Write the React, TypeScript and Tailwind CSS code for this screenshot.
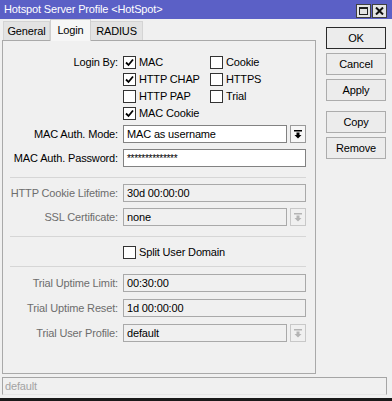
import React from 'react';

const font = { fontFamily: '"Liberation Sans", Arial, sans-serif' };

const Check: React.FC<{ checked?: boolean }> = ({ checked }) => (
  <span className="w-[13px] h-[13px] border border-[#333333] bg-white flex items-center justify-center shrink-0">
    {checked && (
      <svg width="11" height="11" viewBox="0 0 11 11">
        <path d="M2 5.5 L4.5 8 L9 2.5" fill="none" stroke="#000" strokeWidth="1.8" />
      </svg>
    )}
  </span>
);

const CheckItem: React.FC<{ label: string; checked?: boolean }> = ({ label, checked }) => (
  <div className="flex items-center h-[17px]">
    <Check checked={checked} />
    <span className="ml-[3px] text-black">{label}</span>
  </div>
);

const DropArrow: React.FC<{ disabled?: boolean }> = ({ disabled }) => (
  <svg width="8" height="9" viewBox="0 0 8 9">
    <rect x="0" y="0" width="8" height="1.5" fill={disabled ? '#b4b4b4' : '#000'} />
    <path d="M2.5 2.5 H5.5 V5 H7.5 L4 8.5 L0.5 5 H2.5 Z" fill={disabled ? '#b4b4b4' : '#000'} />
  </svg>
);

const Label: React.FC<{ text: string; disabled?: boolean }> = ({ text, disabled }) => (
  <div className={`w-[115px] text-right whitespace-nowrap ${disabled ? 'text-[#6d6d6d]' : 'text-black'}`}>{text}</div>
);

const Field: React.FC<{
  label: string;
  value: string;
  disabled?: boolean;
  select?: boolean;
  className?: string;
  password?: boolean;
}> = ({ label, value, disabled, select, className, password }) => (
  <div className={`flex items-center h-[18px] ${className ?? ''}`}>
    <Label text={label} disabled={disabled} />
    <div
      className={`ml-[5px] h-[18px] flex items-center pl-[3px] border ${
        disabled ? 'border-[#a9a9a9] bg-[#f0f0f0]' : 'border-[#828282] bg-white'
      } ${select ? 'w-[164px]' : 'w-[183px]'}`}
    >
      {password ? (
        <span className="text-[10px] tracking-[-0.3px] leading-none mt-[2px]">{value}</span>
      ) : (
        <span className="text-black">{value}</span>
      )}
    </div>
    {select && (
      <div
        className={`ml-[3px] w-[16px] h-[18px] border flex items-center justify-center ${
          disabled ? 'border-[#c8c8c8] bg-[#f0f0f0]' : 'border-[#9a9a9a] bg-[#f7f7f7]'
        }`}
      >
        <DropArrow disabled={disabled} />
      </div>
    )}
  </div>
);

const Sep: React.FC<{ className?: string }> = ({ className }) => (
  <div className={`ml-[7px] w-[296px] h-px bg-[#d6d6d6] ${className ?? ''}`} />
);

const Btn: React.FC<{ label: string; primary?: boolean; className?: string }> = ({ label, primary, className }) => (
  <div
    className={`w-[60px] h-[22px] flex items-center justify-center border bg-[#ececec] text-black ${
      primary ? 'border-[#2a2a2a]' : 'border-[#acacac]'
    } ${className ?? ''}`}
  >
    {label}
  </div>
);

export default function App() {
  return (
    <div
      className="w-[392px] h-[401px] bg-[#f0f0f0] text-[11px] tracking-[-0.15px] flex flex-col overflow-hidden"
      style={font}
    >
      {/* title bar */}
      <div className="h-[19px] bg-[#5b60c6] flex items-center shrink-0">
        <span className="ml-[4px] text-white text-[11px]">Hotspot Server Profile &lt;HotSpot&gt;</span>
        <div className="ml-auto mr-[5px] flex gap-[1px] mt-[2px]">
          <div className="w-[15px] h-[14px] bg-[#e4e4e4] border border-[#404040] flex items-center justify-center">
            <div className="w-[9px] h-[8px] border border-[#202020] border-t-2" />
          </div>
          <div className="w-[15px] h-[14px] bg-[#e4e4e4] border border-[#404040] flex items-center justify-center">
            <svg width="9" height="8" viewBox="0 0 9 8">
              <path d="M1 0.5 L8 7.5 M8 0.5 L1 7.5" stroke="#111" strokeWidth="2" />
            </svg>
          </div>
        </div>
      </div>

      <div className="flex shrink-0">
        {/* left: tabs + panel */}
        <div className="ml-[2px] w-[314px] flex flex-col">
          <div className="h-[21px] flex items-end relative z-10">
            <div className="ml-[1px] w-[47px] h-[19px] bg-[#e3e3e3] border border-b-0 border-[#d4d4d4] flex items-center justify-center text-black">
              General
            </div>
            <div className="w-[41px] h-[22px] -mb-px bg-[#f6f6f6] border border-b-0 border-[#cfcfcf] flex items-center justify-center text-black">
              Login
            </div>
            <div className="w-[52px] h-[19px] bg-[#e3e3e3] border border-b-0 border-l-0 border-[#d4d4d4] flex items-center justify-center text-black">
              RADIUS
            </div>
          </div>
          <div className="h-[334px] border border-[#a9a9a9] flex flex-col">
            <div className="flex mt-[13px]">
              <div className="h-[17px] flex items-center">
                <Label text="Login By:" />
              </div>
              <div className="ml-[5px] grid grid-cols-[87px_auto]">
                <CheckItem label="MAC" checked />
                <CheckItem label="Cookie" />
                <CheckItem label="HTTP CHAP" checked />
                <CheckItem label="HTTPS" />
                <CheckItem label="HTTP PAP" />
                <CheckItem label="Trial" />
                <CheckItem label="MAC Cookie" checked />
              </div>
            </div>
            <Field className="mt-[3px]" label="MAC Auth. Mode:" value="MAC as username" select />
            <Field className="mt-[6px]" label="MAC Auth. Password:" value="**************" password />
            <Sep className="mt-[10px]" />
            <Field className="mt-[6px]" label="HTTP Cookie Lifetime:" value="30d 00:00:00" disabled />
            <Field className="mt-[6px]" label="SSL Certificate:" value="none" disabled select />
            <Sep className="mt-[10px]" />
            <div className="mt-[9px] ml-[120px] flex items-center h-[13px]">
              <Check />
              <span className="ml-[3px] text-black">Split User Domain</span>
            </div>
            <Sep className="mt-[7px]" />
            <Field className="mt-[7px]" label="Trial Uptime Limit:" value="00:30:00" disabled />
            <Field className="mt-[7px]" label="Trial Uptime Reset:" value="1d 00:00:00" disabled />
            <Field className="mt-[7px]" label="Trial User Profile:" value="default" disabled select />
          </div>
        </div>

        {/* right: buttons */}
        <div className="ml-[10px] mt-[8px] flex flex-col">
          <Btn label="OK" primary />
          <Btn label="Cancel" className="mt-[4px]" />
          <Btn label="Apply" className="mt-[4px]" />
          <Btn label="Copy" className="mt-[10px]" />
          <Btn label="Remove" className="mt-[4px]" />
        </div>
      </div>

      {/* status bar */}
      <div className="mt-[3px] ml-[2px] w-[385px] h-[18px] border border-[#a5a5a5] border-b-[#e6e6e6] flex items-center pl-[2px] text-[#a3a3a3] shrink-0">
        default
      </div>
      <div className="mt-auto h-[3px] bg-[#1a1a1a] shrink-0" />
    </div>
  );
}
